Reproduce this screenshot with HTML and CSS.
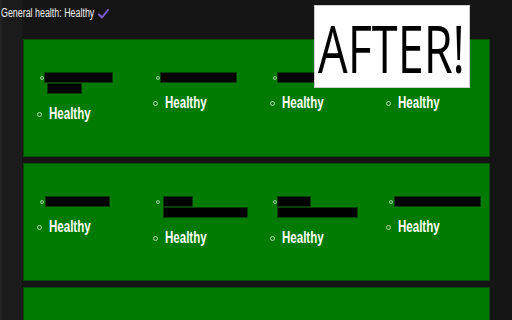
FILE: index.html
```html
<!DOCTYPE html>
<html>
<head>
  <title>Health status</title>
  <link rel="stylesheet" href="styles.css">
</head>
<body>
  <div class="header">
    <span class="header-text">General health: Healthy</span>
    <svg class="check" width="11" height="10" viewBox="0 0 11 10">
      <path d="M1 5.5 L4 8.5 L10 1" fill="none" stroke="#7b5fd0" stroke-width="2" stroke-linecap="round" stroke-linejoin="round"/>
    </svg>
  </div>

  <!-- Service panels -->
  <div class="panel">
    <ul class="services">
      <li class="service">
        <div class="name"><span class="redact w69">xxxxxxxxx</span><span class="redact w35 ml3">xxxx</span></div>
        <div class="status"><span>Healthy</span></div>
      </li>
      <li class="service">
        <div class="name"><span class="redact w77">xxxxxxxxx</span></div>
        <div class="status"><span>Healthy</span></div>
      </li>
      <li class="service">
        <div class="name"><span class="redact w40">xxxx</span></div>
        <div class="status"><span>Healthy</span></div>
      </li>
      <li class="service">
        <div class="name"><span class="redact w60">xxxxxx</span></div>
        <div class="status"><span>Healthy</span></div>
      </li>
    </ul>
  </div>

  <div class="panel">
    <ul class="services">
      <li class="service">
        <div class="name"><span class="redact w65 ml1">xxxxxxx</span></div>
        <div class="status"><span>Healthy</span></div>
      </li>
      <li class="service">
        <div class="name"><span class="redact w30 ml3">xxx</span><span class="redact w85 ml3">xxxxxxxxx</span></div>
        <div class="status"><span>Healthy</span></div>
      </li>
      <li class="service">
        <div class="name"><span class="redact w34">xxx</span><span class="redact w81">xxxxxxxxx</span></div>
        <div class="status"><span>Healthy</span></div>
      </li>
      <li class="service">
        <div class="name"><span class="redact w87 ml1">xxxxxxxxx</span></div>
        <div class="status"><span>Healthy</span></div>
      </li>
    </ul>
  </div>

  <div class="panel">
    <ul class="services">
      <li class="service">
        <div class="name"><span class="redact w60">xxxxxx</span></div>
        <div class="status"><span>Healthy</span></div>
      </li>
    </ul>
  </div>

  <!-- Sticker over the page -->
  <div class="sticker"><span>AFTER!</span></div>
</body>
</html>
```

FILE: styles.css
```css
body {
  margin: 0;
  height: 320px;
  overflow: hidden;
  font-family: "Liberation Sans", Arial, sans-serif;
  background: linear-gradient(to right, #222 0 2px, #1b1b1b 2px 22px, #151515 22px);
  color: #fff;
}
.header {
  height: 39px;
  padding: 7px 0 0 1px;
  box-sizing: border-box;
  font-size: 12px;
  line-height: 12px;
  color: #f2f2f2;
  display: flex;
  align-items: flex-start;
}
.header-text {
  display: inline-block;
  width: 94px;
  white-space: nowrap;
  transform: scaleX(0.74);
  transform-origin: left;
}
.check {
  margin: 2px 0 0 3px;
}
.panel {
  width: 467px;
  height: 118px;
  margin: 0 0 6px 23px;
  box-sizing: border-box;
  background-color: #007a00;
  border: 1px solid #0b4a0b;
}
.services {
  list-style: none;
  margin: 0;
  padding: 32px 0 0 0;
  display: grid;
  grid-template-columns: repeat(4, 1fr);
}
.service {
  position: relative;
}
.name {
  position: relative;
  padding-left: 20px;
  font-size: 11px;
  line-height: 12px;
}
.name::before {
  content: "";
  position: absolute;
  left: 16px;
  top: 4px;
  width: 2px;
  height: 2px;
  border: 1px solid #9fd09f;
  border-radius: 50%;
}
.redact {
  display: block;
  height: 11px;
  background: #000;
  color: #000;
  font-size: 7px;
  line-height: 9px;
  border: 1px solid #064006;
  box-sizing: border-box;
}
.ml1 { margin-left: 1px; }
.ml3 { margin-left: 3px; }
.w30 { width: 30px; }
.w34 { width: 34px; }
.w35 { width: 35px; }
.w40 { width: 40px; }
.w60 { width: 60px; }
.w65 { width: 65px; }
.w69 { width: 69px; }
.w77 { width: 77px; }
.w81 { width: 81px; }
.w85 { width: 85px; }
.w87 { width: 87px; }
.status {
  position: relative;
  margin-top: 11px;
  padding-left: 25px;
  font-size: 16px;
  line-height: 18px;
  font-weight: bold;
}
.status span {
  display: inline-block;
  transform: scaleX(0.72);
  transform-origin: left;
}
.status::before {
  content: "";
  position: absolute;
  left: 13px;
  top: 7px;
  width: 3px;
  height: 3px;
  border: 1px solid #b5dab5;
  border-radius: 50%;
}
.sticker {
  position: absolute;
  left: 314px;
  top: 5px;
  width: 156px;
  height: 83px;
  box-sizing: border-box;
  background: #fff;
  border: 1px solid #cfcfcf;
  color: #000;
  font-family: "Open Sans", sans-serif;
  font-weight: 500;
  font-size: 66px;
  line-height: 83px;
  white-space: nowrap;
  overflow: hidden;
}
.sticker span {
  display: inline-block;
  margin-left: 3px;
  transform: scaleX(0.71);
  transform-origin: left;
}
```
